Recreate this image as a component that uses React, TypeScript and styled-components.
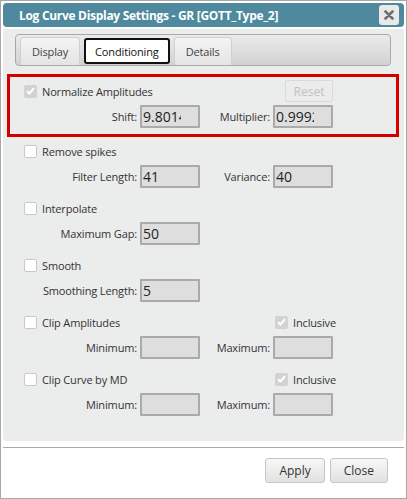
import React from "react";
import styled, { createGlobalStyle } from "styled-components";

const GlobalStyle = createGlobalStyle`
  html, body {
    margin: 0;
    padding: 0;
    background: #ffffff;
  }
  body {
    font-family: "Open Sans", "Noto Sans", sans-serif;
    font-size: 11px;
    letter-spacing: -0.15px;
    color: #333333;
  }
`;

const Dialog = styled.div`
  width: 407px;
  height: 499px;
  box-sizing: border-box;
  border: 1px solid #a8a8a8;
  padding: 2px;
  background: #ffffff;
  display: flex;
  flex-direction: column;
`;

const TitleBar = styled.div`
  height: 24px;
  border-radius: 4px;
  background: #4e899d;
  display: flex;
  align-items: center;
  justify-content: space-between;
  padding: 0 5px 0 16px;
`;

const Title = styled.span`
  color: #ffffff;
  font-weight: bold;
  font-size: 12px;
  letter-spacing: -0.3px;
`;

const CloseIcon = styled.button`
  width: 20px;
  height: 20px;
  padding: 0;
  border: none;
  border-radius: 3px;
  background: #e9e9e9;
  display: flex;
  align-items: center;
  justify-content: center;
`;

const Panel = styled.div`
  height: 412px;
  margin-top: 2px;
  background: #ebecec;
  border-radius: 0 0 4px 4px;
  display: flex;
  flex-direction: column;
`;

const TabStrip = styled.div`
  height: 32px;
  margin: 5px 13px 0 12px;
  box-sizing: border-box;
  border: 1px solid #a9a9a9;
  border-radius: 4px;
  background: linear-gradient(#ebebeb, #d2d2d2);
  display: flex;
  align-items: flex-end;
  gap: 4px;
  padding-left: 4px;
`;

const Tab = styled.div<{ $active?: boolean }>`
  box-sizing: border-box;
  height: ${(p) => (p.$active ? "26px" : "28px")};
  margin-bottom: ${(p) => (p.$active ? "1px" : "0")};
  padding: 0 ${(p) => (p.$active ? "9px" : "11px")};
  display: flex;
  align-items: center;
  font-size: 11px;
  color: ${(p) => (p.$active ? "#111111" : "#444444")};
  background: ${(p) =>
    p.$active ? "#ffffff" : "linear-gradient(#f4f4f4, #e4e4e4)"};
  border: ${(p) => (p.$active ? "2px solid #111111" : "1px solid #d0d0d0")};
  border-bottom: ${(p) => (p.$active ? "2px solid #111111" : "none")};
  border-radius: 3px 3px ${(p) => (p.$active ? "3px 3px" : "0 0")};
`;

const Body = styled.div`
  display: flex;
  flex-direction: column;
  margin-top: 8px;
`;

const Highlight = styled.div`
  margin: 0 5px 4px 4px;
  border: 3px solid #d40000;
  padding: 4px 0 6px 14px;
`;

const Section = styled.div<{ $last?: boolean }>`
  display: grid;
  grid-template-columns: 113px 60px 67px 60px;
  grid-template-rows: 20px 23px;
  column-gap: 3px;
  row-gap: 4px;
  margin-bottom: ${(p) => (p.$last ? "0" : "10px")};
`;

const Plain = styled.div`
  padding-left: 21px;
`;

const Head = styled.label`
  grid-column: 1 / 4;
  grid-row: 1;
  display: flex;
  align-items: center;
  gap: 5px;
`;

const Aside = styled.div`
  grid-column: 4;
  grid-row: 1;
  display: flex;
  align-items: center;
  justify-content: flex-end;
`;

const InclusiveBox = styled.label`
  grid-column: 4;
  grid-row: 1;
  display: flex;
  align-items: center;
  gap: 5px;
  padding-left: 2px;
`;

const Box = styled.span<{ $checked?: boolean }>`
  width: 13px;
  height: 13px;
  box-sizing: border-box;
  border-radius: 2px;
  border: 1px solid ${(p) => (p.$checked ? "#d2d2d2" : "#c9c9c9")};
  background: ${(p) => (p.$checked ? "#d2d2d2" : "#ffffff")};
  display: flex;
  align-items: center;
  justify-content: center;
  flex: none;
`;

const FieldLabel = styled.span`
  grid-row: 2;
  display: flex;
  align-items: center;
  justify-content: flex-end;
`;

const Field = styled.input`
  grid-row: 2;
  width: 60px;
  height: 23px;
  box-sizing: border-box;
  margin: 0;
  border: 2px solid #aaaaaa;
  border-radius: 1px;
  background: #dedede;
  padding: 0 17px 0 1px;
  font-family: "Open Sans", "Noto Sans", sans-serif;
  font-size: 14px;
  color: #222222;
  outline: none;
`;

const ResetButton = styled.button`
  width: 48px;
  height: 22px;
  box-sizing: border-box;
  border: 1px solid #dadada;
  border-radius: 2px;
  background: #ececec;
  color: #c2c2c2;
  font-family: "Open Sans", "Noto Sans", sans-serif;
  font-size: 12px;
  padding: 0;
`;

const Separator = styled.div`
  height: 1px;
  margin-top: 6px;
  background: #aaaaaa;
`;

const Footer = styled.div`
  display: flex;
  justify-content: flex-end;
  gap: 5px;
  padding: 10px 16px 0 0;
`;

const FooterButton = styled.button`
  height: 25px;
  box-sizing: border-box;
  padding: 0 13px;
  border: 1px solid #c6c6c6;
  border-radius: 3px;
  background: linear-gradient(#f7f7f7, #e1e1e1);
  color: #333333;
  font-family: "Open Sans", "Noto Sans", sans-serif;
  font-size: 12px;
`;

const Check: React.FC<{ checked?: boolean }> = ({ checked }) => (
  <Box $checked={checked}>
    {checked && (
      <svg width="9" height="8" viewBox="0 0 9 8">
        <path
          d="M1 4.2 L3.4 6.5 L8 1.2"
          fill="none"
          stroke="#ffffff"
          strokeWidth="2"
        />
      </svg>
    )}
  </Box>
);

interface FieldSpec {
  label: string;
  value: string;
}

interface SectionProps {
  title: string;
  checked?: boolean;
  fields: FieldSpec[];
  extra?: "reset" | "inclusive";
  last?: boolean;
}

const Group: React.FC<SectionProps> = ({ title, checked, fields, extra, last }) => (
  <Section $last={last}>
    <Head>
      <Check checked={checked} />
      {title}
    </Head>
    {extra === "reset" && (
      <Aside>
        <ResetButton disabled>Reset</ResetButton>
      </Aside>
    )}
    {extra === "inclusive" && (
      <InclusiveBox>
        <Check checked />
        Inclusive
      </InclusiveBox>
    )}
    {fields.map((f) => (
      <React.Fragment key={f.label}>
        <FieldLabel>{f.label}</FieldLabel>
        <Field readOnly value={f.value} />
      </React.Fragment>
    ))}
  </Section>
);

export default function App() {
  return (
    <>
      <GlobalStyle />
      <Dialog>
        <TitleBar>
          <Title>Log Curve Display Settings - GR [GOTT_Type_2]</Title>
          <CloseIcon>
            <svg width="10" height="10" viewBox="0 0 10 10">
              <path
                d="M1.5 1.5 L8.5 8.5 M8.5 1.5 L1.5 8.5"
                stroke="#6f6f6f"
                strokeWidth="2.6"
                strokeLinecap="round"
              />
            </svg>
          </CloseIcon>
        </TitleBar>
        <Panel>
          <TabStrip>
            <Tab>Display</Tab>
            <Tab $active>Conditioning</Tab>
            <Tab>Details</Tab>
          </TabStrip>
          <Body>
            <Highlight>
              <Group
                title="Normalize Amplitudes"
                checked
                extra="reset"
                last
                fields={[
                  { label: "Shift:", value: "9.801453" },
                  { label: "Multiplier:", value: "0.99921" },
                ]}
              />
            </Highlight>
            <Plain>
              <Group
                title="Remove spikes"
                fields={[
                  { label: "Filter Length:", value: "41" },
                  { label: "Variance:", value: "40" },
                ]}
              />
              <Group
                title="Interpolate"
                fields={[{ label: "Maximum Gap:", value: "50" }]}
              />
              <Group
                title="Smooth"
                fields={[{ label: "Smoothing Length:", value: "5" }]}
              />
              <Group
                title="Clip Amplitudes"
                extra="inclusive"
                fields={[
                  { label: "Minimum:", value: "" },
                  { label: "Maximum:", value: "" },
                ]}
              />
              <Group
                title="Clip Curve by MD"
                extra="inclusive"
                last
                fields={[
                  { label: "Minimum:", value: "" },
                  { label: "Maximum:", value: "" },
                ]}
              />
            </Plain>
          </Body>
        </Panel>
        <Separator />
        <Footer>
          <FooterButton>Apply</FooterButton>
          <FooterButton>Close</FooterButton>
        </Footer>
      </Dialog>
    </>
  );
}
